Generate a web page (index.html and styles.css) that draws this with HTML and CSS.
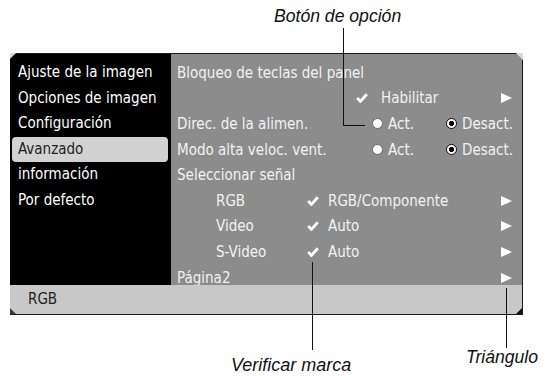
FILE: index.html
```html
<!DOCTYPE html>
<html lang="es">
<head>
    <meta charset="UTF-8">
    <meta name="viewport" content="width=device-width, initial-scale=1.0">
    <title>Menú Avanzado</title>
    <link rel="stylesheet" href="styles.css">
</head>
<body>

<div class="figure">

    <!-- Pantalla del menú -->
    <div class="screen">
        <div class="main">
            <ul class="menu">
                <li>Ajuste de la imagen</li>
                <li>Opciones de imagen</li>
                <li>Configuración</li>
                <li class="selected">Avanzado</li>
                <li>información</li>
                <li>Por defecto</li>
            </ul>

            <div class="panel">
                <div class="row">Bloqueo de teclas del panel</div>
                <div class="row">
                    <span class="check wide"><svg width="12" height="10" viewBox="0 0 12 10"><path d="M1.2 5 L4.4 8.4 L10.8 1.2" /></svg></span>
                    <span class="value">Habilitar</span>
                    <span class="arrow"><svg width="11" height="10" viewBox="0 0 11 10"><polygon points="0,0 11,5 0,10" /></svg></span>
                </div>
                <div class="row">
                    <span class="label">Direc. de la alimen.</span>
                    <span class="option"><i class="radio"></i>Act.</span>
                    <span class="option"><i class="radio on"></i>Desact.</span>
                </div>
                <div class="row">
                    <span class="label">Modo alta veloc. vent.</span>
                    <span class="option"><i class="radio"></i>Act.</span>
                    <span class="option"><i class="radio on"></i>Desact.</span>
                </div>
                <div class="row">Seleccionar señal</div>
                <div class="row">
                    <span class="sub">RGB</span>
                    <span class="check"><svg width="12" height="10" viewBox="0 0 12 10"><path d="M1.2 5 L4.4 8.4 L10.8 1.2" /></svg></span>
                    <span class="value">RGB/Componente</span>
                    <span class="arrow"><svg width="11" height="10" viewBox="0 0 11 10"><polygon points="0,0 11,5 0,10" /></svg></span>
                </div>
                <div class="row">
                    <span class="sub">Video</span>
                    <span class="check"><svg width="12" height="10" viewBox="0 0 12 10"><path d="M1.2 5 L4.4 8.4 L10.8 1.2" /></svg></span>
                    <span class="value">Auto</span>
                    <span class="arrow"><svg width="11" height="10" viewBox="0 0 11 10"><polygon points="0,0 11,5 0,10" /></svg></span>
                </div>
                <div class="row">
                    <span class="sub">S-Video</span>
                    <span class="check"><svg width="12" height="10" viewBox="0 0 12 10"><path d="M1.2 5 L4.4 8.4 L10.8 1.2" /></svg></span>
                    <span class="value">Auto</span>
                    <span class="arrow"><svg width="11" height="10" viewBox="0 0 11 10"><polygon points="0,0 11,5 0,10" /></svg></span>
                </div>
                <div class="row">
                    Página2
                    <span class="arrow"><svg width="11" height="10" viewBox="0 0 11 10"><polygon points="0,0 11,5 0,10" /></svg></span>
                </div>
            </div>
        </div>
        <div class="status">RGB</div>
    </div>

    <!-- Rótulos -->
    <div class="note note-radio">Botón de opción</div>
    <div class="line line-radio-v"></div>
    <div class="line line-radio-h"></div>

    <div class="line line-check"></div>
    <div class="note note-check">Verificar marca</div>

    <div class="line line-arrow"></div>
    <div class="note note-arrow">Triángulo</div>

</div>

</body>
</html>
```

FILE: styles.css
```css
body {
    margin: 0;
    background: #fff;
}
.figure {
    position: relative;
    width: 553px;
    height: 376px;
    padding: 53px 0 0 10px;
    box-sizing: border-box;
    font-family: "DejaVu Sans Condensed", "DejaVu Sans", sans-serif;
    font-size: 15px;
}

/* pantalla */
.screen {
    position: relative;
    width: 513px;
    height: 262px;
    box-sizing: border-box;
    border: 1px solid #1a1a1a;
    border-left: none;
    display: flex;
    flex-direction: column;
}
.screen::before,
.screen::after {
    content: "";
    position: absolute;
    width: 0;
    height: 0;
}
.screen::before {
    top: -1px;
    left: 0;
    border-top: 6px solid #d8d8d8;
    border-right: 6px solid transparent;
}
.screen::after {
    top: -1px;
    right: -1px;
    border-top: 7px solid #dcdcdc;
    border-left: 7px solid transparent;
}
.main {
    display: flex;
    height: 231px;
}
.menu {
    list-style: none;
    margin: 0;
    width: 161px;
    padding: 6px 3px 0 2px;
    box-sizing: border-box;
    background: #000;
    color: #fff;
}
.menu li {
    height: 25.6px;
    line-height: 25.6px;
    padding-left: 6px;
    box-sizing: border-box;
    white-space: nowrap;
}
.menu li.selected {
    background: #d2d2d2;
    color: #1e1e1e;
    border-radius: 4px;
}
.panel {
    flex: 1;
    background: #8c8c8c;
    color: #f2f2f2;
    padding: 6px 0 0 6px;
}
.row {
    display: flex;
    align-items: center;
    height: 25.6px;
    white-space: nowrap;
}
.label {
    width: 195px;
}
.sub {
    width: 130px;
    padding-left: 39px;
    box-sizing: border-box;
}
.check {
    display: flex;
    width: 21px;
}
.check.wide {
    margin-left: 179px;
    width: 25px;
}
.check path {
    fill: none;
    stroke: #fff;
    stroke-width: 2.8;
}
.arrow {
    display: flex;
    margin-left: auto;
    margin-right: 10px;
}
.arrow polygon {
    fill: #fff;
}
.option {
    display: flex;
    align-items: center;
    width: 74px;
}
.radio {
    flex-shrink: 0;
    width: 11px;
    height: 11px;
    margin-right: 5px;
    border-radius: 50%;
    background: #fff;
    box-sizing: border-box;
    border: 1px solid #666;
}
.radio.on {
    border: 1.5px solid #111;
    background: radial-gradient(circle, #000 0 2.3px, #fff 2.9px);
}
.status {
    flex: 1;
    background: #c8c8c8;
    color: #1e1e1e;
    padding-left: 18px;
    line-height: 28px;
    position: relative;
}
.status::before,
.status::after {
    content: "";
    position: absolute;
    bottom: 0;
    width: 0;
    height: 0;
}
.status::before {
    left: 0;
    border-bottom: 6px solid #3a3a3a;
    border-right: 6px solid transparent;
}
.status::after {
    right: 0;
    border-bottom: 6px solid #111;
    border-left: 6px solid transparent;
}

/* rótulos */
.note {
    position: absolute;
    font-family: "Liberation Sans", Arial, sans-serif;
    font-style: italic;
    font-size: 17.6px;
    color: #111;
    line-height: 20px;
}
.note-radio {
    left: 274px;
    top: 6px;
}
.note-check {
    left: 231px;
    top: 355px;
    font-size: 18px;
}
.note-arrow {
    left: 466px;
    top: 347px;
}
.line {
    position: absolute;
    background: #111;
}
.line-radio-v {
    left: 343px;
    top: 28px;
    width: 1px;
    height: 98px;
}
.line-radio-h {
    left: 343px;
    top: 125px;
    width: 22px;
    height: 1px;
}
.line-check {
    left: 312px;
    top: 262px;
    width: 1px;
    height: 88px;
}
.line-arrow {
    left: 506px;
    top: 288px;
    width: 1px;
    height: 60px;
}
```
